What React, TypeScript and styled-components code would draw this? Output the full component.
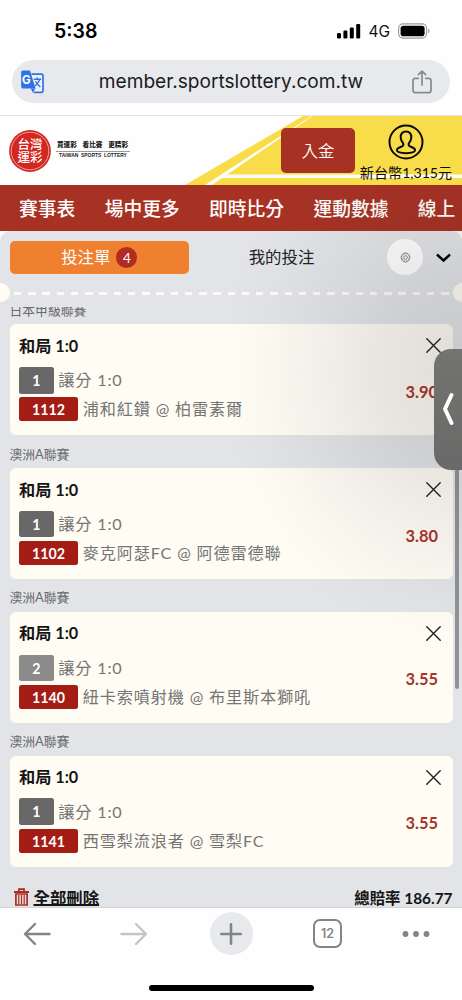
import React from "react";
import styled, { createGlobalStyle } from "styled-components";

const GlobalStyle = createGlobalStyle`
  * { box-sizing: border-box; }
  body { margin: 0; background: #fff; }
  button { border: 0; padding: 0; background: none; font: inherit; color: inherit; }
`;

const Screen = styled.div`
  position: relative;
  width: 462px;
  height: 1000px;
  overflow: hidden;
  display: flex;
  flex-direction: column;
  background: #fefefe;
  color: #151515;
  font-family: Lato, "Noto Sans CJK TC", sans-serif;
`;

const StatusBar = styled.div`
  height: 60px;
  flex: none;
  display: flex;
  align-items: center;
  justify-content: space-between;
  padding: 2px 31px 0 54px;
  font-family: Inter, sans-serif;
`;
const Time = styled.span`
  font-size: 19.5px;
  font-weight: 600;
  color: #000;
`;
const Indicators = styled.div`
  display: flex;
  align-items: center;
  font-size: 15.5px;
  color: #111;
`;
const Network = styled.span`
  margin: 1px 8px 0 7px;
`;

const UrlBar = styled.div`
  height: 43px;
  flex: none;
  margin: 0 12px;
  padding: 0 18px 0 9px;
  border-radius: 22px;
  background: #e8e9ed;
  display: flex;
  align-items: center;
  justify-content: space-between;
  font-family: Inter, sans-serif;
`;
const Url = styled.span`
  margin: 0 0 1px 6px;
  font-size: 19.1px;
  color: #1a1b1e;
  white-space: nowrap;
`;

const SiteHeader = styled.header`
  position: relative;
  height: 70px;
  flex: none;
  margin-top: 12px;
  border-top: 1px solid #e4e4e6;
  display: flex;
  justify-content: space-between;
`;
const Stripes = styled.svg`
  position: absolute;
  inset: 0;
`;
const Brand = styled.div`
  position: relative;
  display: flex;
  align-items: center;
  padding-left: 9px;
  gap: 5px;
`;
const Tagline = styled.div`
  width: 74px;
  margin-top: -2px;
  display: flex;
  flex-direction: column;
  align-items: center;
  color: #222;
  font-family: "Liberation Sans", "Noto Sans CJK TC", sans-serif;
  white-space: nowrap;
`;
const TaglineZh = styled.div`
  width: 100%;
  display: flex;
  justify-content: space-between;
  padding: 0 2px 0 1px;
  font-size: 6.6px;
  line-height: 10px;
  font-weight: 900;
  border-bottom: 1px solid #999;
  height: 12px;
`;
const TaglineEn = styled.div`
  font-size: 4.9px;
  line-height: 8px;
  font-weight: 700;
  letter-spacing: 0.05px;
  word-spacing: 1.2px;
`;
const Account = styled.div`
  position: relative;
  display: flex;
  gap: 4px;
  padding-right: 9px;
`;
const Deposit = styled.button`
  width: 74px;
  height: 45px;
  margin-top: 12px;
  padding-bottom: 2px;
  border-radius: 5px;
  background: #a73224;
  color: #fff;
  font-size: 16.3px;
  font-weight: 350;
`;
const Balance = styled.div`
  width: 94px;
  display: flex;
  flex-direction: column;
  align-items: center;
  padding-top: 8px;
  color: #0b0b0b;
  font-size: 14.1px;
  line-height: 25px;
  white-space: nowrap;
`;

const Nav = styled.nav`
  height: 46px;
  flex: none;
  display: flex;
  align-items: center;
  gap: 29.4px;
  padding: 0 0 2px 19px;
  background: #a73224;
  color: #fff;
  font-size: 18.75px;
  font-weight: 500;
  white-space: nowrap;
  overflow: hidden;
`;

const SlipBackdrop = styled.div`
  flex: 1;
  min-height: 0;
  background: #fffcf4;
`;
const Slip = styled.main`
  position: relative;
  height: 100%;
  background: #e3e4e7;
  border-radius: 10px 10px 0 0;
  display: flex;
  flex-direction: column;
  overflow: hidden;
`;
const Tabs = styled.div`
  height: 53px;
  flex: none;
  display: flex;
  align-items: center;
  padding: 0 8px 0 9.5px;
`;
const Tab = styled.button<{ $active?: boolean }>`
  width: ${(p) => (p.$active ? 179.5 : 185)}px;
  height: 33.5px;
  border-radius: 5px;
  display: flex;
  align-items: center;
  justify-content: center;
  gap: 6px;
  background: ${(p) => (p.$active ? "#ee8030" : "transparent")};
  color: ${(p) => (p.$active ? "#fff" : "#222")};
  font-size: 16.4px;
`;
const TabLabel = styled.span`
  padding-bottom: 2.5px;
`;
const Count = styled.span`
  width: 21px;
  height: 21px;
  border-radius: 50%;
  background: #b22b20;
  font-size: 13.5px;
  line-height: 22px;
`;
const Settings = styled.button`
  width: 36px;
  height: 36px;
  margin: -1px 13px 0;
  border-radius: 50%;
  background: #fff;
  display: flex;
  align-items: center;
  justify-content: center;
`;
const Perforation = styled.div`
  height: 19px;
  flex: none;
  margin-top: -1px;
  display: flex;
  align-items: center;
  justify-content: space-between;
`;
const Notch = styled.span<{ $right?: boolean }>`
  width: 9.5px;
  height: 19px;
  background: #fffcf4;
  border-radius: ${(p) => (p.$right ? "10px 0 0 10px" : "0 10px 10px 0")};
`;
const Dashes = styled.span`
  width: 435px;
  height: 3px;
  margin: 2px 0 0 1px;
  background: repeating-linear-gradient(90deg, #fffcf4 0 7.4px, transparent 7.4px 14.24px);
`;

const Bets = styled.div`
  margin-top: 5px;
  flex: 1;
  min-height: 0;
  overflow: hidden;
  padding: 0 9.5px;
`;
const Shifted = styled.div`
  margin-top: -15.6px;
`;
const League = styled.div`
  height: 32.8px;
  padding-top: 5.3px;
  font-size: 12.8px;
  line-height: 27px;
  color: #6a6a6c;
`;
const Card = styled.article`
  height: 111px;
  padding: 9.5px 12px 0 9.5px;
  border-radius: 6px;
  background: #fffcf4;
  display: flex;
  justify-content: space-between;
`;
const Pick = styled.h3`
  margin: 0 0 10.3px;
  font-size: 16.2px;
  line-height: 23px;
  font-weight: 700;
  color: #151515;
`;
const Line = styled.div`
  display: flex;
  align-items: center;
  gap: 4.8px;
  margin-bottom: 3.8px;
  color: #757575;
  font-size: 16.2px;
  line-height: 24px;
  letter-spacing: 0.8px;
  white-space: nowrap;
`;
const Tag = styled.span<{ $kind: "home" | "away" | "code" }>`
  width: ${(p) => (p.$kind === "code" ? 59 : 34.5)}px;
  height: ${(p) => (p.$kind === "code" ? 24 : 26.5)}px;
  line-height: ${(p) => (p.$kind === "code" ? 25 : 27)}px;
  border-radius: 2.5px;
  background: ${(p) => ({ home: "#686868", away: "#8b8b8b", code: "#a51c14" })[p.$kind]};
  color: #fff;
  font-size: 14.2px;
  font-weight: 700;
  letter-spacing: 0;
  text-align: center;
`;
const CardSide = styled.div`
  display: flex;
  flex-direction: column;
  align-items: flex-end;
  padding-top: 4.5px;
`;
const Odds = styled.strong`
  margin: 25.5px 2.5px 0 0;
  color: #a73529;
  font-size: 16.4px;
  line-height: 25px;
`;
const Summary = styled.div`
  display: flex;
  justify-content: space-between;
  align-items: center;
  margin-top: 18.5px;
  padding-left: 4px;
  height: 24px;
  font-size: 16.4px;
  font-weight: 700;
  white-space: nowrap;
`;
const Clear = styled.button`
  display: flex;
  align-items: center;
  gap: 5px;
`;
const ClearText = styled.span`
  text-decoration: underline;
  text-decoration-thickness: 1.5px;
  text-underline-offset: 0;
`;
const Total = styled.span`
  font-size: 15.4px;
`;
const ScrollThumb = styled.div`
  position: absolute;
  right: 3.5px;
  top: 160px;
  width: 3.5px;
  height: 297.5px;
  border-radius: 2px;
  background: #919295;
`;

const Shade = styled.div`
  position: absolute;
  left: 182px;
  top: 185px;
  width: 280px;
  height: 520px;
  background: radial-gradient(
    ellipse 240px 280px at 280px 185px,
    rgba(30, 34, 34, 0.14),
    rgba(30, 34, 34, 0.1) 35%,
    rgba(30, 34, 34, 0.055) 60%,
    rgba(30, 34, 34, 0.016) 85%,
    rgba(30, 34, 34, 0)
  );
`;
const Handle = styled.button`
  position: absolute;
  right: 0;
  top: 348.5px;
  width: 28.5px;
  height: 121.5px;
  border-radius: 17px 0 0 17px;
  background: linear-gradient(#737370, #696969);
  display: flex;
  align-items: center;
  justify-content: center;
`;

const Toolbar = styled.footer`
  height: 93px;
  flex: none;
  background: #fefefe;
  border-top: 1px solid #d4d4d6;
  display: flex;
  flex-direction: column;
  align-items: center;
`;
const Buttons = styled.div`
  width: 100%;
  height: 51px;
  display: grid;
  grid-template-columns: 74px 120px 74px 119px 57px;
`;
const ToolButton = styled.button`
  display: flex;
  align-items: center;
  justify-content: center;
`;
const Plus = styled.span`
  width: 43px;
  height: 43px;
  border-radius: 50%;
  background: #e8e9ed;
  display: flex;
  align-items: center;
  justify-content: center;
`;
const TabCount = styled.span`
  width: 29px;
  height: 29px;
  border: 2px solid #80858b;
  border-radius: 7px;
  color: #80858b;
  font: 600 12.5px/26px Inter, sans-serif;
  text-align: center;
`;
const HomeIndicator = styled.div`
  width: 165px;
  height: 6px;
  margin-top: 26px;
  border-radius: 3px;
  background: #000;
`;

type Bet = { league: string; side: "1" | "2"; code: string; teams: string; odds: string };

const bets: Bet[] = [
  { league: "日本甲級聯賽", side: "1", code: "1112", teams: "浦和紅鑽 @ 柏雷素爾", odds: "3.90" },
  { league: "澳洲A聯賽", side: "1", code: "1102", teams: "麥克阿瑟FC @ 阿德雷德聯", odds: "3.80" },
  { league: "澳洲A聯賽", side: "2", code: "1140", teams: "紐卡索噴射機 @ 布里斯本獅吼", odds: "3.55" },
  { league: "澳洲A聯賽", side: "1", code: "1141", teams: "西雪梨流浪者 @ 雪梨FC", odds: "3.55" },
];

const StatusIcons = () => (
  <Indicators>
    <svg width="24" height="16" viewBox="0 0 24 16" fill="#000">
      <rect x="0" y="10" width="4" height="5.5" rx="1.2" />
      <rect x="6.4" y="7.5" width="4" height="8" rx="1.2" />
      <rect x="12.8" y="4.5" width="4" height="11" rx="1.2" />
      <rect x="19.2" y="1" width="4" height="14.5" rx="1.2" />
    </svg>
    <Network>4G</Network>
    <svg width="33" height="16" viewBox="0 0 33 16">
      <rect x="0.6" y="0.9" width="28" height="14.2" rx="4.5" fill="none" stroke="#9b9b9b" strokeWidth="1.1" />
      <rect x="2.6" y="2.8" width="24" height="10.4" rx="2.8" fill="#000" />
      <path d="M30.2 5.6c1.7.7 1.7 4.1 0 4.8z" fill="#9b9b9b" />
    </svg>
  </Indicators>
);

const TranslateIcon = () => (
  <svg width="23" height="24" viewBox="0 0 23 24">
    <path d="M10.5 4.2H20.6a1.4 1.4 0 0 1 1.4 1.4V21a1.4 1.4 0 0 1-1.4 1.4H12.5" fill="#eef2fb" stroke="#2f72e4" strokeWidth="1.7" />
    <path d="M1.8.4h7.2l5.6 18H1.8A1.6 1.6 0 0 1 .2 16.8V2A1.6 1.6 0 0 1 1.8.4z" fill="#2f72e4" />
    <path d="M9.8 18.4h4.8l-3 4.2z" fill="#2f72e4" />
    <text x="1.1" y="13.7" fontSize="11.5" fontWeight="700" fontFamily="Inter, sans-serif" fill="#fff">G</text>
    <path d="M12.8 9.2h7.4M16.3 7.6v1.6M18.8 9.2c-.8 3.2-2.6 5.2-4.8 6.8M14.6 11.2c1 2.2 2.7 4.2 4.8 5.8" fill="none" stroke="#2f72e4" strokeWidth="1.4" />
  </svg>
);

const ShareIcon = () => (
  <svg width="20" height="24" viewBox="0 0 20 24" fill="none" stroke="#85898f" strokeWidth="1.7" strokeLinecap="round" strokeLinejoin="round">
    <path d="M6.3 8.3H3.2A2.2 2.2 0 0 0 1 10.5v10a2.2 2.2 0 0 0 2.2 2.2h13.6a2.2 2.2 0 0 0 2.2-2.2v-10a2.2 2.2 0 0 0-2.2-2.2h-3.1" />
    <path d="M10 15V1.3M6.4 4.7 10 1.2l3.6 3.5" />
  </svg>
);

const Seal = () => (
  <svg width="42" height="42" viewBox="0 0 42 42">
    <circle cx="21" cy="21" r="20.9" fill="#d2261f" />
    <circle cx="21" cy="21" r="18.8" fill="none" stroke="#f6d5d2" strokeWidth="0.7" />
    <text fill="#fff" fontFamily="Noto Sans CJK TC, sans-serif" fontWeight="500" fontSize="12.5" textAnchor="middle">
      <tspan x="21" y="19.4">台灣</tspan>
      <tspan x="21" y="32">運彩</tspan>
    </text>
  </svg>
);

const UserIcon = () => (
  <svg width="36" height="36" viewBox="0 0 36 36" fill="none" stroke="#0b0b0b" strokeWidth="2">
    <circle cx="18" cy="18" r="16.5" />
    <path strokeLinejoin="round" d="M18 7.6c-3.6 0-5.6 2.4-5.3 6 .2 2.5 1.2 4.4 2.5 5.8.5 1.6-.1 2.6-1.6 3.2-2.7 1-4.7 1.6-4.7 3.5 0 2.1 4.2 3.1 9.1 3.1s9.1-1 9.1-3.1c0-1.9-2-2.5-4.7-3.5-1.5-.6-2.1-1.6-1.6-3.2 1.3-1.4 2.3-3.3 2.5-5.8.3-3.6-1.7-6-5.3-6z" />
  </svg>
);

const GearIcon = () => (
  <svg width="11" height="11" viewBox="0 0 24 24" fill="none" stroke="#666" strokeWidth="1.7">
    <path strokeLinejoin="round" d="M10 2h4l.8 2.8 2.5-1.3 2.9 2.9-1.4 2.5 2.8 1.100v4l-2.800.9 1.400 2.600-2.900 2.800-2.500-1.300L14 22h-4l-.8-3-2.500 1.300-2.900-2.800 1.400-2.600L2.400 14v-4l2.800-1.100-1.400-2.500 2.900-2.900 2.500 1.300z" />
    <circle cx="12" cy="12" r="4" />
  </svg>
);

const CloseIcon = () => (
  <svg width="15" height="15" viewBox="0 0 15 15" stroke="#222" strokeWidth="1.4" strokeLinecap="round">
    <path d="M.8.8l13.4 13.4M14.2.8.8 14.2" />
  </svg>
);

const TrashIcon = () => (
  <svg width="15" height="18" viewBox="0 0 15 18" fill="none" stroke="#ae2b20">
    <path d="M0 4h15M5 3.5V1.1h5v2.4" strokeWidth="1.8" />
    <path d="M1.9 6h11.2v11H1.9z" strokeWidth="1.7" />
    <path d="M4.8 7v9M7.5 7v9M10.2 7v9" strokeWidth="1.2" />
  </svg>
);

const ArrowIcon = ({ color, flip }: { color: string; flip?: boolean }) => (
  <svg width="28" height="24" viewBox="0 0 28 24" fill="none" stroke={color} strokeWidth="2.4" strokeLinecap="round" strokeLinejoin="round">
    <path d={flip ? "M1.5 12h24.5M16 2l10 10-10 10" : "M26.5 12H2M12 2 2 12l10 10"} />
  </svg>
);

const BetCard = ({ bet }: { bet: Bet }) => (
  <>
    <League>{bet.league}</League>
    <Card>
      <div>
        <Pick>和局 1:0</Pick>
        <Line>
          <Tag $kind={bet.side === "1" ? "home" : "away"}>{bet.side}</Tag>
          <span>讓分 1:0</span>
        </Line>
        <Line>
          <Tag $kind="code">{bet.code}</Tag>
          <span>{bet.teams}</span>
        </Line>
      </div>
      <CardSide>
        <CloseIcon />
        <Odds>{bet.odds}</Odds>
      </CardSide>
    </Card>
  </>
);

export default function App() {
  return (
    <Screen>
      <GlobalStyle />
      <StatusBar>
        <Time>5:38</Time>
        <StatusIcons />
      </StatusBar>
      <UrlBar>
        <TranslateIcon />
        <Url>member.sportslottery.com.tw</Url>
        <ShareIcon />
      </UrlBar>
      <SiteHeader>
        <Stripes width="462" height="69" viewBox="0 0 462 69">
          <path d="M303 0H462V69H185z" fill="#f8dc4a" />
          <path d="M311.5 0h1.2L212 69h-7z" fill="#fffdf5" />
          <path d="M225 58.5H462v3.5H219z" fill="#fffdf5" />
        </Stripes>
        <Brand>
          <Seal />
          <Tagline>
            <TaglineZh><span>買運彩</span><span>看比賽</span><span>更精彩</span></TaglineZh>
            <TaglineEn>TAIWAN SPORTS LOTTERY</TaglineEn>
          </Tagline>
        </Brand>
        <Account>
          <Deposit>入金</Deposit>
          <Balance>
            <UserIcon />
            <span>新台幣1,315元</span>
          </Balance>
        </Account>
      </SiteHeader>
      <Nav>
        {["賽事表", "場中更多", "即時比分", "運動數據", "線上"].map((t) => (
          <span key={t}>{t}</span>
        ))}
      </Nav>
      <SlipBackdrop>
        <Slip>
          <Tabs>
            <Tab $active><TabLabel>投注單</TabLabel><Count>4</Count></Tab>
            <Tab><TabLabel>我的投注</TabLabel></Tab>
            <Settings><GearIcon /></Settings>
            <svg width="15" height="10" viewBox="0 0 15 10" fill="none" stroke="#000" strokeWidth="2.4">
              <path d="M1 1.5l6.5 6 6.5-6" />
            </svg>
          </Tabs>
          <Perforation>
            <Notch />
            <Dashes />
            <Notch $right />
          </Perforation>
          <Bets>
            <Shifted>
              {bets.map((b) => <BetCard key={b.code} bet={b} />)}
              <Summary>
                <Clear><TrashIcon /><ClearText>全部刪除</ClearText></Clear>
                <Total>總賠率 186.77</Total>
              </Summary>
            </Shifted>
          </Bets>
          <ScrollThumb />
        </Slip>
      </SlipBackdrop>
      <Toolbar>
        <Buttons>
          <ToolButton><ArrowIcon color="#80858b" /></ToolButton>
          <ToolButton><ArrowIcon color="#c5c5c7" flip /></ToolButton>
          <ToolButton>
            <Plus>
              <svg width="22" height="22" viewBox="0 0 22 22" stroke="#80858b" strokeWidth="2.6" strokeLinecap="round">
                <path d="M11 1.3v19.4M1.3 11h19.4" />
              </svg>
            </Plus>
          </ToolButton>
          <ToolButton><TabCount>12</TabCount></ToolButton>
          <ToolButton>
            <svg width="28" height="6" viewBox="0 0 28 6" fill="#80858b">
              <circle cx="3.5" cy="3" r="2.9" />
              <circle cx="14" cy="3" r="2.9" />
              <circle cx="24.5" cy="3" r="2.9" />
            </svg>
          </ToolButton>
        </Buttons>
        <HomeIndicator />
      </Toolbar>
      <Shade />
      <Handle>
        <svg width="12" height="34" viewBox="0 0 12 34" fill="none" stroke="#fff" strokeWidth="4" strokeLinecap="round" strokeLinejoin="round">
          <path d="M9.5 3 3 17l6.500 14" />
        </svg>
      </Handle>
    </Screen>
  );
}
